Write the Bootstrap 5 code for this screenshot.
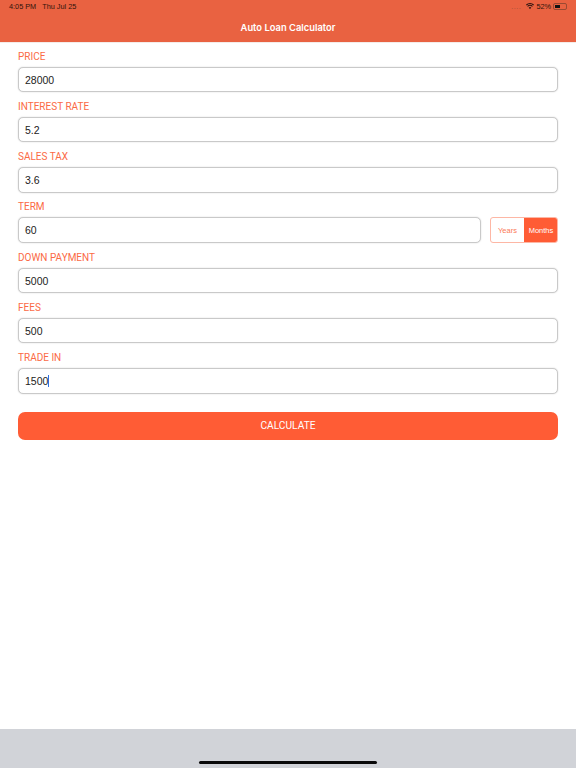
<!DOCTYPE html>
<html lang="en">
<head>
<meta charset="utf-8">
<title>Auto Loan Calculator</title>
<link href="https://cdn.jsdelivr.net/npm/bootstrap@5.3.0/dist/css/bootstrap.min.css" rel="stylesheet">
<style>
html,body{height:768px;overflow:hidden;background:#fff}
body{font-family:"Roboto","Liberation Sans",sans-serif;width:576px}
.app-shell{height:768px}
.app-header{height:43px;background:#e96241;color:#fff;border-bottom:1px solid #f4ece9}
.status-row{height:13px;padding:0 9px;font-family:"Liberation Sans",sans-serif;font-size:7.3px;font-weight:400;color:#2e140c;line-height:11px}
.app-title{font-family:"Inter",sans-serif;font-size:9.4px;font-weight:600;line-height:16px;margin-top:7px}
.form-area{padding:6.5px 18px 0}
.field-block{height:50.25px}
.field-label{display:block;font-size:10px;line-height:14px;height:17px;margin:0;color:#fb6a45}
.field-input{display:block;width:100%;height:25.5px;border:1px solid #c9c9c9;border-radius:5px;background:#fff;font-family:"Liberation Sans",sans-serif;font-size:10.5px;line-height:24px;padding:0 6px;color:#222;box-shadow:0 0 1.5px rgba(0,0,0,.2)}
.caret-mark{display:inline-block;width:1px;height:12px;background:#2f6fe0;vertical-align:-2px}
.term-row{gap:9px}
.unit-switch{width:68px;height:26px;border:1px solid #fdb7a5;border-radius:3px;overflow:hidden;font-family:"Liberation Sans",sans-serif;font-size:7.5px;flex:none}
.unit-item{flex:0 0 33px;display:flex;align-items:center;justify-content:center;color:#fb7a58}
.unit-on{flex:1 1 auto;background:#ff5c35;color:#fff;margin:-1px -1px -1px 0}
.calc-btn{display:block;width:100%;height:28px;margin-top:11px;background:#ff5c35;border:0;border-radius:7px;color:#fff;font-size:10.2px;line-height:28px;padding:0;--bs-btn-hover-bg:#ff5c35}
.kbd-strip{height:39px;background:#d1d3d8}
.home-bar{width:178px;height:3px;border-radius:2px;background:#0a0a0a;margin-bottom:4px}
.batt{width:14px;height:7px;border:1px solid #9a4a32;border-radius:2px;padding:1px;display:block}
.batt i{display:block;width:52%;height:100%;background:#111}
.dots-mark{letter-spacing:.5px;color:#a0503a;margin-right:3px}
.status-right{gap:2px}
</style>
</head>
<body>
<div class="app-shell d-flex flex-column">
  <header class="app-header">
    <div class="status-row d-flex align-items-center justify-content-between">
      <span>4:05 PM&nbsp;&nbsp;&nbsp;Thu Jul 25</span>
      <span class="d-flex align-items-center status-right">
        <span class="dots-mark">....</span>
        <svg width="8" height="6.4" viewBox="0 0 10 8" aria-hidden="true"><path d="M5 7.6 3.4 5.8a2.4 2.4 0 0 1 3.2 0L5 7.6ZM2.4 4.7 1.5 3.7a5.2 5.2 0 0 1 7 0l-.9 1a3.9 3.9 0 0 0-5.2 0ZM.9 3 0 2a7.4 7.4 0 0 1 10 0l-.9 1A6.1 6.1 0 0 0 .9 3Z" fill="#2a1410"/></svg>
        <span>52%</span>
        <span class="batt"><i></i></span>
      </span>
    </div>
    <div class="app-title text-center">Auto Loan Calculator</div>
  </header>
  <main class="form-area flex-grow-1">
    <div class="field-block"><label class="field-label">PRICE</label><div class="field-input">28000</div></div>
    <div class="field-block"><label class="field-label">INTEREST RATE</label><div class="field-input">5.2</div></div>
    <div class="field-block"><label class="field-label">SALES TAX</label><div class="field-input">3.6</div></div>
    <div class="field-block"><label class="field-label">TERM</label>
      <div class="d-flex term-row">
        <div class="field-input flex-grow-1 w-auto">60</div>
        <div class="unit-switch d-flex"><span class="unit-item">Years</span><span class="unit-item unit-on">Months</span></div>
      </div>
    </div>
    <div class="field-block"><label class="field-label">DOWN PAYMENT</label><div class="field-input">5000</div></div>
    <div class="field-block"><label class="field-label">FEES</label><div class="field-input">500</div></div>
    <div class="field-block"><label class="field-label">TRADE IN</label><div class="field-input">1500<span class="caret-mark"></span></div></div>
    <button type="button" class="btn calc-btn">CALCULATE</button>
  </main>
  <div class="kbd-strip d-flex align-items-end justify-content-center"><div class="home-bar"></div></div>
</div>
<script src="https://cdn.jsdelivr.net/npm/bootstrap@5.3.0/dist/js/bootstrap.bundle.min.js"></script>
</body>
</html>
